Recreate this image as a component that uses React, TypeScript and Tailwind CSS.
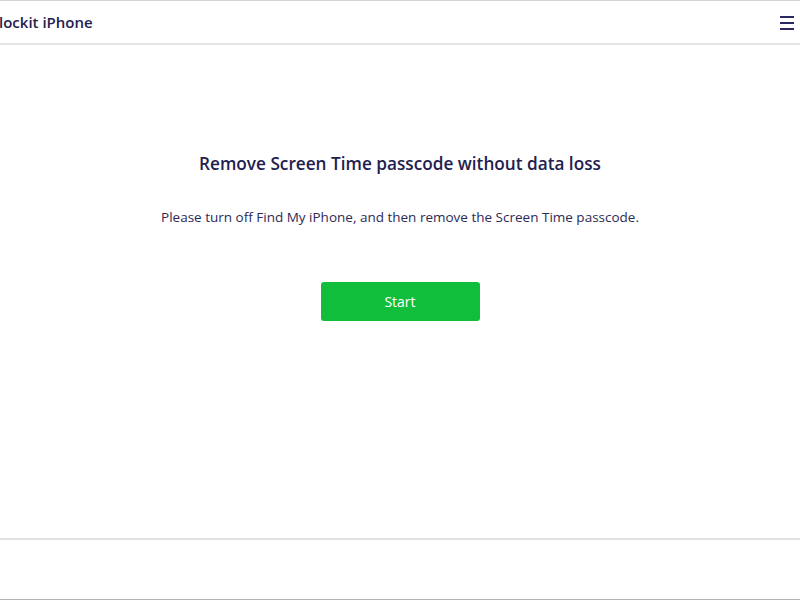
export default function App() {
  return (
    <div className="flex h-[600px] w-[800px] flex-col overflow-hidden bg-white font-['Open_Sans',sans-serif] text-[#23204f]">
      <header className="flex h-[45px] shrink-0 items-center justify-between border-t border-b-2 border-t-[#d4d4d8] border-b-[#e5e5e8] pr-[6px]">
        <span className="-ml-[1px] text-[15px] font-semibold">lockit iPhone</span>
        <svg width="14" height="15" viewBox="0 0 14 15" className="text-[#2b2760]">
          <rect x="0" y="1" width="14" height="2" fill="currentColor" />
          <rect x="0" y="7" width="14" height="2" fill="currentColor" />
          <rect x="0" y="13" width="14" height="2" fill="currentColor" />
        </svg>
      </header>

      <main className="flex flex-1 flex-col items-center">
        <h1 className="mt-[106px] text-[17.2px] font-semibold">Remove Screen Time passcode without data loss</h1>
        <p className="mt-[30px] text-[13.5px] text-[#2d2a55]">
          Please turn off Find My iPhone, and then remove the Screen Time passcode.
        </p>
        <button className="mt-[55px] h-[39px] w-[159px] rounded-[3px] bg-[#10be3c] text-[14px] text-white">
          Start
        </button>
      </main>

      <footer className="h-[62px] shrink-0 border-t-2 border-b border-t-[#e2e2e4] border-b-[#b4b4b4]" />
    </div>
  )
}
